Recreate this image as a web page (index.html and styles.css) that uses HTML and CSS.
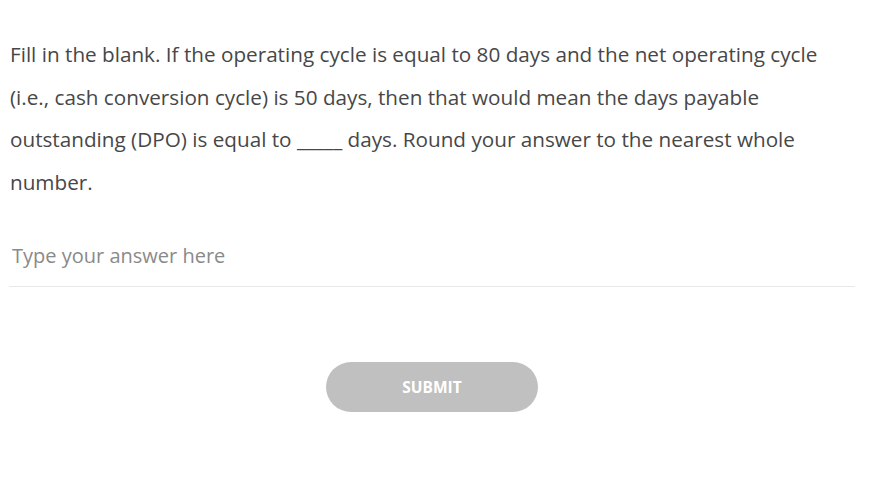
FILE: index.html
```html
<!DOCTYPE html>
<html lang="en">
<head>
<meta charset="utf-8">
<link rel="stylesheet" href="styles.css">
</head>
<body>
<main class="question">
  <p class="prompt">Fill in the blank. If the operating cycle is equal to 80 days and the net operating cycle (i.e., cash conversion cycle) is 50 days, then that would mean the days payable outstanding (DPO) is equal to _____ days. Round your answer to the nearest whole number.</p>
  <div class="answer">
    <input class="answer-input" type="text" placeholder="Type your answer here">
  </div>
  <div class="actions">
    <button class="submit" type="button">SUBMIT</button>
  </div>
</main>
</body>
</html>
```
FILE: styles.css
```css
html, body {
  margin: 0;
  padding: 0;
  background: #ffffff;
}
body {
  font-family: "Open Sans", "Liberation Sans", sans-serif;
  color: #444444;
}
.question {
  width: 846px;
  padding: 33px 0 0 9px;
  display: flex;
  flex-direction: column;
}
.prompt {
  margin: 0;
  padding-left: 1px;
  font-size: 20.7px;
  line-height: 42.5px;
  color: #474747;
}
.answer {
  margin-top: 22px;
  border-bottom: 1px solid #e8e8e8;
}
.answer-input {
  display: block;
  width: 100%;
  box-sizing: border-box;
  border: none;
  outline: none;
  padding: 0 3px;
  height: 61px;
  font-family: "Open Sans", "Liberation Sans", sans-serif;
  font-size: 20px;
  color: #444;
  background: transparent;
}
.answer-input::placeholder {
  color: #8a8a8a;
}
.actions {
  display: flex;
  justify-content: center;
  margin-top: 75px;
}
.submit {
  width: 212px;
  height: 50px;
  border: none;
  border-radius: 25px;
  background: #c0c0c0;
  color: #ffffff;
  font-family: "Open Sans", "Liberation Sans", sans-serif;
  font-weight: 700;
  font-size: 15.5px;
  letter-spacing: 0;
  padding: 0;
}
```
